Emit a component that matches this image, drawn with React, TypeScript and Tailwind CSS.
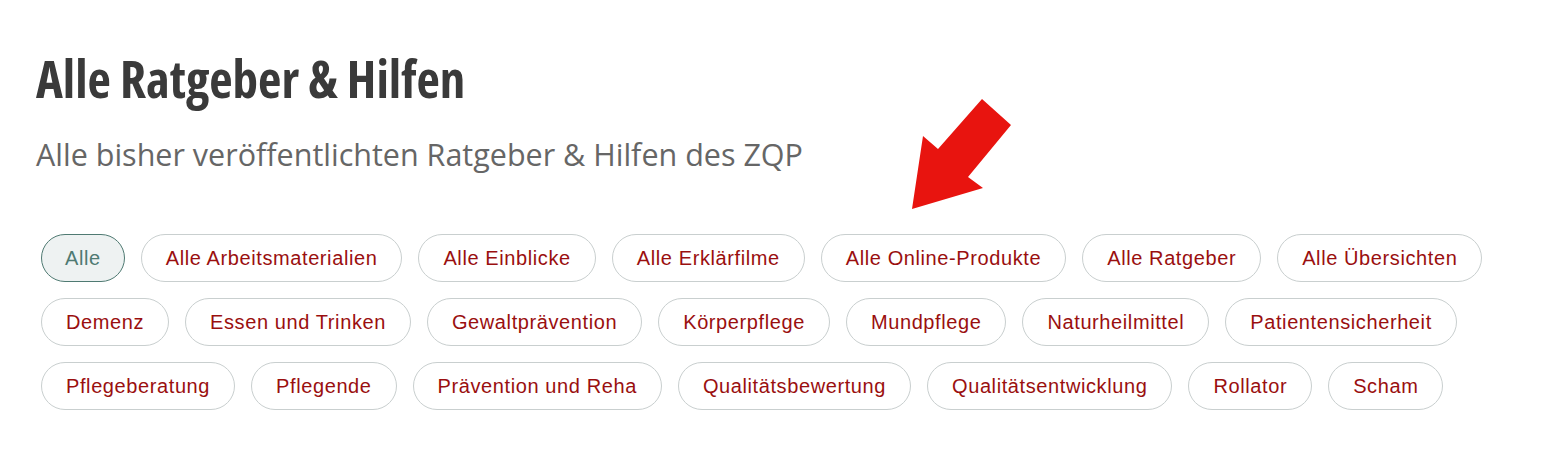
import React from "react";

const row1 = ["Alle Arbeitsmaterialien", "Alle Einblicke", "Alle Erklärfilme", "Alle Online-Produkte", "Alle Ratgeber", "Alle Übersichten"];
const row2 = ["Demenz", "Essen und Trinken", "Gewaltprävention", "Körperpflege", "Mundpflege", "Naturheilmittel", "Patientensicherheit"];
const row3 = ["Pflegeberatung", "Pflegende", "Prävention und Reha", "Qualitätsbewertung", "Qualitätsentwicklung", "Rollator", "Scham"];

function Pill({ label }: { label: string }) {
  return (
    <span className="inline-flex h-[48px] items-center rounded-full border border-[#c9cfcf] bg-white px-[24px] text-[20px] tracking-[0.6px] text-[#9a0f0f] [font-family:'Liberation_Sans',Arial,sans-serif]">
      {label}
    </span>
  );
}

export default function App() {
  return (
    <div className="relative h-[452px] w-[1544px] bg-white">
      <div className="pt-[50px] pl-[36px]">
        <h1 className="text-[51px] leading-[56px] font-bold text-[#3a3a3a] font-stretch-condensed [font-family:'Open_Sans',sans-serif]">
          Alle Ratgeber &amp; Hilfen
        </h1>
        <p className="mt-[28px] text-[30.5px] leading-[40px] text-[#666666] [font-family:'Open_Sans',sans-serif]">
          Alle bisher veröffentlichten Ratgeber &amp; Hilfen des ZQP
        </p>
      </div>
      <div className="mt-[60px] flex flex-col gap-4 pl-[41px]">
        <div className="flex gap-[16px]">
          <span className="inline-flex h-[48px] items-center rounded-full border border-[#4f7a72] bg-[#eef2f2] px-[23px] text-[20px] tracking-[0.6px] text-[#4f7a72] [font-family:'Liberation_Sans',Arial,sans-serif]">
            Alle
          </span>
          {row1.map((l) => (
            <Pill key={l} label={l} />
          ))}
        </div>
        <div className="flex gap-[16px]">
          {row2.map((l) => (
            <Pill key={l} label={l} />
          ))}
        </div>
        <div className="flex gap-[16px]">
          {row3.map((l) => (
            <Pill key={l} label={l} />
          ))}
        </div>
      </div>
      <svg className="absolute left-0 top-0" width="1544" height="452" viewBox="0 0 1544 452">
        <polygon points="982,99 1011,125 968,177 983,188 912,209 923,136 938,149" fill="#e8140f" />
      </svg>
    </div>
  );
}
